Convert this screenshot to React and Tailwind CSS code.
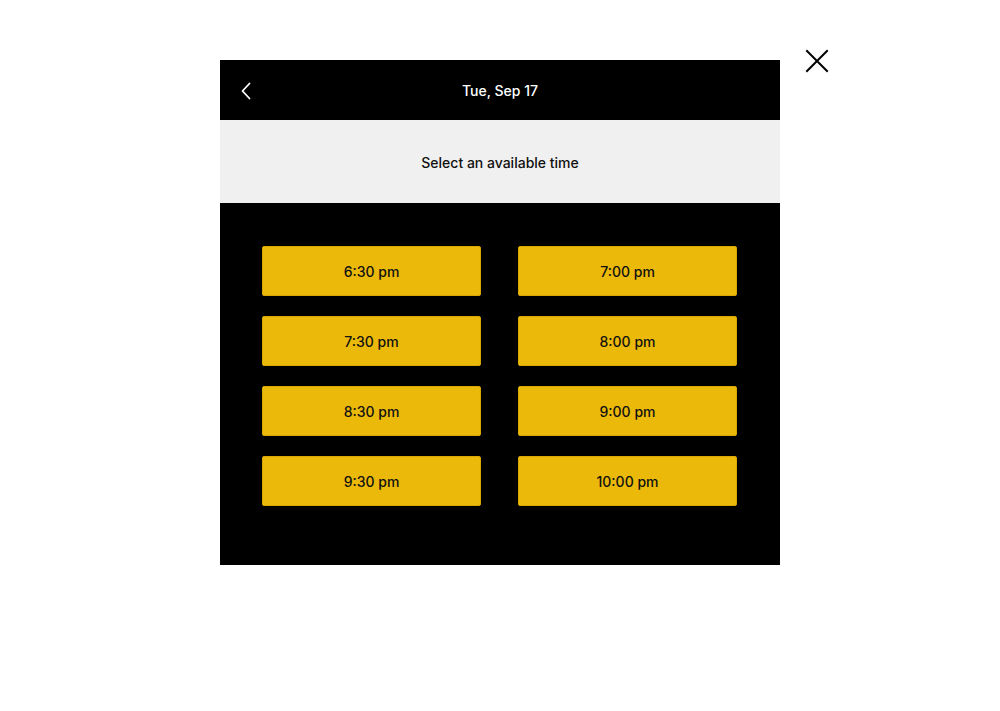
export default function App() {
  const times = ["6:30 pm", "7:00 pm", "7:30 pm", "8:00 pm", "8:30 pm", "9:00 pm", "9:30 pm", "10:00 pm"];
  return (
    <div className="relative w-[1000px] h-[711px] bg-white" style={{ fontFamily: "Inter, 'Liberation Sans', sans-serif" }}>
      <button className="absolute left-[805px] top-[49px] w-[24px] h-[24px] flex items-center justify-center" aria-label="Close">
        <svg width="24" height="24" viewBox="0 0 24 24" fill="none" stroke="#000" strokeWidth="2" strokeLinecap="square">
          <path d="M2 2 L22 22 M22 2 L2 22" />
        </svg>
      </button>
      <div className="pt-[60px] flex justify-center">
        <div className="w-[560px] flex flex-col">
          <div className="h-[60px] bg-black flex items-center relative">
            <button className="absolute left-[16px] top-[21px] w-[20px] h-[20px] flex items-center justify-center" aria-label="Back">
              <svg width="12" height="18" viewBox="0 0 12 18" fill="none" stroke="#fff" strokeWidth="1.8" strokeLinecap="round" strokeLinejoin="round">
                <path d="M9.5 1.5 L2.5 9 L9.5 16.5" />
              </svg>
            </button>
            <div className="flex-1 text-center text-white text-[14px] font-medium pt-[1px]">Tue, Sep 17</div>
          </div>
          <div className="h-[83px] bg-[#f0f0f0] flex items-center justify-center text-[14px] font-medium text-[#111] pt-[1px]">
            Select an available time
          </div>
          <div className="bg-black pt-[43px] pb-[59px] pl-[42px] pr-[43px] grid grid-cols-2 gap-x-[37px] gap-y-[20px]">
            {times.map((t) => (
              <button key={t} className="h-[50px] bg-[#ebb90a] border border-[#d9a800] rounded-[2px] flex items-center justify-center text-[14px] font-medium text-[#111] pt-[1px]">
                {t}
              </button>
            ))}
          </div>
        </div>
      </div>
    </div>
  );
}
